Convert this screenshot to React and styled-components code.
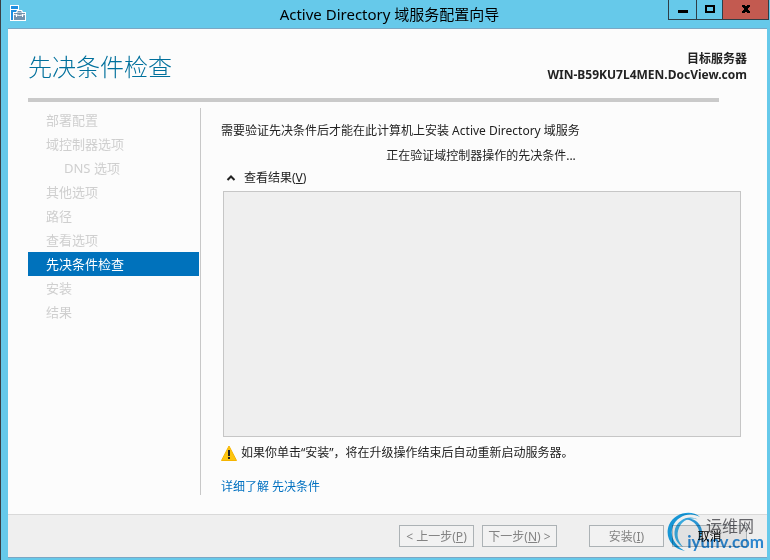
import React, { useState } from 'react';
import styled, { createGlobalStyle } from 'styled-components';

const GlobalStyle = createGlobalStyle`
  * {
    box-sizing: border-box;
  }

  body {
    margin: 0;
    font-family: "Noto Sans", "Noto Sans CJK SC", sans-serif;
    font-size: 12px;
    line-height: 16px;
    color: #222;
  }
`

const Frame = styled.div`
  display: flex;
  flex-direction: column;
  min-height: 100vh;
  background-color: #66c9ea;
  border-left: 1px solid #3a3f44;
`

const TitleBar = styled.header`
  display: grid;
  grid-template-columns: 1fr auto 1fr;
  height: 28px;
  padding: 0 1px 0 9px;
`

const AppIcon = styled.svg`
  width: 16px;
  height: 16px;
  margin-top: 5px;
`

const Title = styled.h1`
  margin: 0;
  font-size: 15px;
  font-weight: 400;
  line-height: 28px;
  color: #000;
`

const Controls = styled.div`
  display: flex;
  justify-content: flex-end;
`

const ControlButton = styled.button`
  display: flex;
  justify-content: center;
  width: ${props => props.$width}px;
  height: 20px;
  padding: 0;
  border: solid #2f3e46;
  border-width: 0 0 1px 1px;
  background-color: ${props => props.$close ? "#c35a50" : "transparent"};

  &:last-child {
    border-right-width: 1px;
  }
`

const Content = styled.div`
  display: flex;
  flex-direction: column;
  flex: 1;
  margin: 0 3px 2px 7px;
  border: solid #7ba7c4;
  border-width: 1px 0;
  background-color: #fcfcfc;
`

const Header = styled.div`
  display: flex;
  justify-content: space-between;
  height: 69px;
  padding: 22px 20px 0;
`

const Heading = styled.h2`
  margin: 0;
  font-size: 24px;
  font-weight: 300;
  line-height: 32px;
  color: #00709c;
`

const Target = styled.div`
  font-weight: 700;
  line-height: 16px;
  text-align: right;
`

const Rule = styled.hr`
  width: auto;
  height: 4px;
  margin: 0 48px 0 20px;
  border: none;
  background-color: #cacaca;
`

const Body = styled.div`
  display: flex;
  flex: 1;
  padding: 6px 26px 19px 20px;
`

const Steps = styled.ol`
  width: 173px;
  margin: 0;
  padding: 0 1px 0 0;
  border-right: 1px solid #c8c8c8;
  list-style: none;
`

const Step = styled.li`
  padding-left: ${props => props.$nested ? 36 : 18}px;
  font-size: 13px;
  line-height: 24px;
  color: ${props => props.$current ? "#fff" : "#cfcfcf"};
  background-color: ${props => props.$current ? "#0072bc" : "transparent"};
`

const Main = styled.main`
  display: flex;
  flex-direction: column;
  flex: 1;
  padding: 15px 0 0 20px;
`

const Message = styled.p`
  margin: 0;
`

const Progress = styled.p`
  margin: 9px 0 6px;
  text-align: center;
`

const Toggle = styled.button`
  display: flex;
  align-items: center;
  align-self: flex-start;
  gap: 8px;
  padding: 0 0 0 5px;
  border: none;
  background: none;
  font: inherit;
  color: inherit;
`

const Results = styled.div`
  flex: 1;
  margin: 5px 0 8px 2px;
  border: 1px solid #c6c6c6;
  background-color: #efefef;
`

const Warning = styled.p`
  display: flex;
  align-items: center;
  gap: 4px;
  margin: 0 0 18px;
`

const MoreLink = styled.a`
  align-self: flex-start;
  color: #0070c0;
  text-decoration: none;
`

const Footer = styled.footer`
  position: relative;
  display: flex;
  justify-content: flex-end;
  gap: 8px;
  height: 43px;
  padding: 10px 20px 0 0;
  border-top: 1px solid #d9d9d9;
  background-color: #efefef;
`

const Button = styled.button`
  width: 75px;
  height: 22px;
  padding: 2px 0 0;
  border: 1px solid #acb2b5;
  background-color: #e1e1e1;
  font: inherit;
  color: #000;
  white-space: nowrap;

  &:disabled {
    background-color: #f2f2f2;
    color: #838383;
  }
`

const InstallButton = styled(Button)`
  margin-left: 24px;
`

const Watermark = styled.div`
  position: absolute;
  right: 0;
  bottom: 0;
  width: 101px;
  height: 46px;
  mix-blend-mode: multiply;
  pointer-events: none;
`

const Swirl = styled.svg`
  position: absolute;
  left: 0;
  top: 0;
`

const SiteName = styled.span`
  position: absolute;
  right: 13px;
  top: 5px;
  font-size: 16px;
  line-height: 20px;
  color: #6b6b70;
`

const SiteUrl = styled.span`
  position: absolute;
  right: 3px;
  top: 21px;
  font-family: Lato, sans-serif;
  font-size: 17px;
  font-weight: 700;
  line-height: 20px;
  color: #2f8fdc;
`

const steps = [
  { name: "部署配置" },
  { name: "域控制器选项" },
  { name: "DNS 选项", nested: true },
  { name: "其他选项" },
  { name: "路径" },
  { name: "查看选项" },
  { name: "先决条件检查", current: true },
  { name: "安装" },
  { name: "结果" },
]

const App = () => {
  const [open, setOpen] = useState(true)

  return (
    <>
      <GlobalStyle />
      <Frame>
        <TitleBar>
          <AppIcon viewBox="0 0 16 16">
            <path d="M0 0h9v16H0z" fill="#fff" />
            <path d="M1 1h7v3H1zM1 5h7v10H1z" fill="#1e8fe0" />
            <path d="M3 7h3l1-2h5l1 2h3v9H3z" fill="#fff" />
            <path d="M4 8h11v7H4z" fill="#7392ad" />
            <path d="M7 7.500l1-1.500h3l1 1.500z" fill="#7392ad" />
            <path d="M4 9.500q5.500 2 11 0M6.500 9v3M12.500 9v3" fill="none" stroke="#fff" strokeWidth="1" />
          </AppIcon>
          <Title>Active Directory 域服务配置向导</Title>
          <Controls>
            <ControlButton $width={28} aria-label="最小化">
              <svg width="10" height="19" shapeRendering="crispEdges"><path d="M0 10h10v3H0z" /></svg>
            </ControlButton>
            <ControlButton $width={26} aria-label="最大化">
              <svg width="10" height="19" shapeRendering="crispEdges">
                <path d="M0 5h10v8H0zM2 7v4h6V7z" fillRule="evenodd" />
              </svg>
            </ControlButton>
            <ControlButton $width={47} $close aria-label="关闭">
              <svg width="10" height="19" shapeRendering="crispEdges">
                <path d="M1 5h3v1h2V5h3v2H8v1H7v2h1v1h1v2H6v-1H4v1H1v-2h1v-1h1V8H2V7H1z" />
              </svg>
            </ControlButton>
          </Controls>
        </TitleBar>

        <Content>
          <Header>
            <Heading>先决条件检查</Heading>
            <Target>
              <div>目标服务器</div>
              <div>WIN-B59KU7L4MEN.DocView.com</div>
            </Target>
          </Header>
          <Rule />

          <Body>
            <Steps>
              {steps.map(step => (
                <Step key={step.name} $nested={step.nested} $current={step.current}>{step.name}</Step>
              ))}
            </Steps>
            <Main>
              <Message>需要验证先决条件后才能在此计算机上安装 Active Directory 域服务</Message>
              <Progress>正在验证域控制器操作的先决条件...</Progress>
              <Toggle aria-expanded={open} onClick={() => setOpen(!open)}>
                <svg width="10" height="8" viewBox="0 0 10 8">
                  <path d="M1.500 6L5 2.500L8.500 6" fill="none" stroke="#222" strokeWidth="2" />
                </svg>
                <span>查看结果(<u>V</u>)</span>
              </Toggle>
              {open && <Results />}
              <Warning>
                <svg width="16" height="16" viewBox="0 0 16 16">
                  <path d="M8 1L15.500 15.500H0.500z" fill="#fdc50f" stroke="#f5b400" strokeWidth="1" strokeLinejoin="round" />
                  <path d="M7 5h2v6H7zM7 12h2v2H7z" fill="#222" />
                </svg>
                如果你单击“安装”，将在升级操作结束后自动重新启动服务器。
              </Warning>
              <MoreLink href="#prerequisites">详细了解 先决条件</MoreLink>
            </Main>
          </Body>

          <Footer>
            <Button disabled>&lt; 上一步(<u>P</u>)</Button>
            <Button disabled>下一步(<u>N</u>) &gt;</Button>
            <InstallButton disabled>安装(<u>I</u>)</InstallButton>
            <Button>取消</Button>
            <Watermark>
              <Swirl width="40" height="42" viewBox="0 0 40 42">
                <path d="M34 6C25 -2 8 2 3 14C-2 27 7 38 19 40C9 35 3 25 7 15C11 5 24 0 34 6z" fill="#18a0e4" />
                <path d="M33 9C24 3 12 8 9 18C7 26 11 33 17 36C12 30 10 24 13 17C16 9 25 5 33 9z" fill="#3db4ec" />
                <path d="M19 8C27 6 35 12 36 20C36 25 34 29 31 31C34 26 34 21 32 17C29 11 25 9 19 8z" fill="#2b9fe2" />
              </Swirl>
              <SiteName>运维网</SiteName>
              <SiteUrl>iyunv.com</SiteUrl>
            </Watermark>
          </Footer>
        </Content>
      </Frame>
    </>
  );
}

export default App;
